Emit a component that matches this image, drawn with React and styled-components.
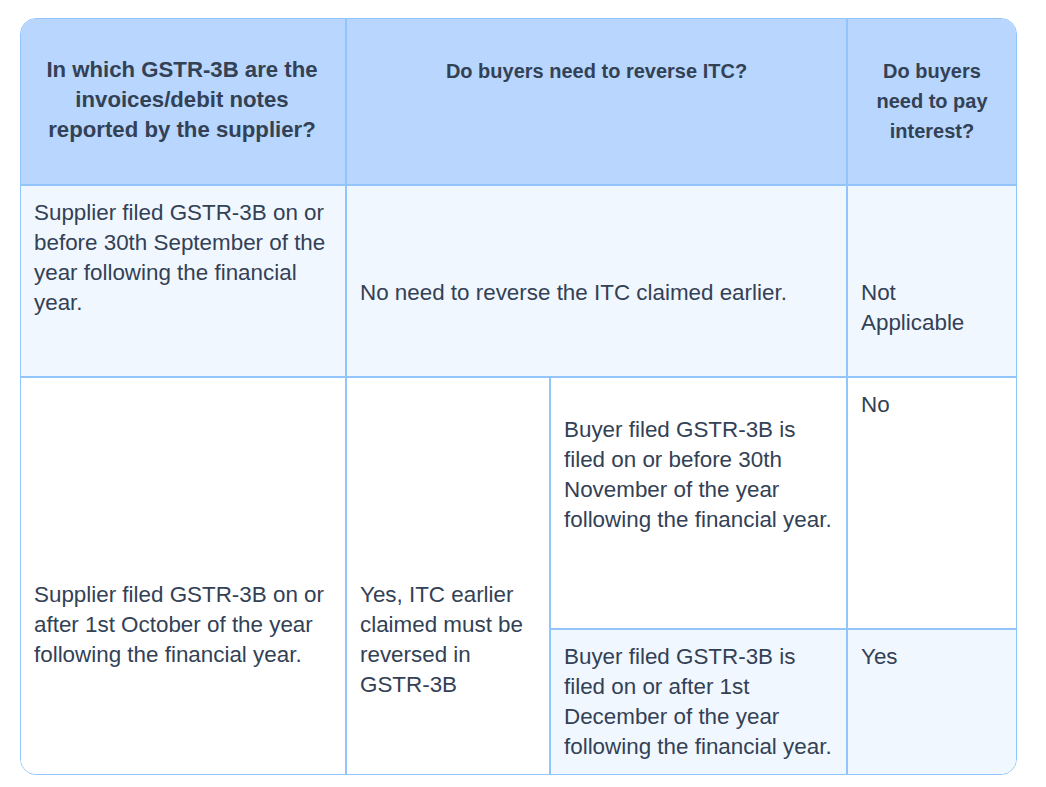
import React from 'react'
import styled, { createGlobalStyle, css } from 'styled-components'

const GlobalStyle = createGlobalStyle`
  body {
    margin: 0;
    background: #ffffff;
    font-family: 'Liberation Sans', Arial, sans-serif;
    color: #334155;
  }
`

const App = () => {
  return (
    <Page>
      <GlobalStyle />
      <Table>
        <HeadCell col="1" row="1" big pad={36}>
          In which GSTR-3B are the invoices/debit notes reported by the supplier?
        </HeadCell>
        <HeadCell col="2 / 4" row="1" pad={37}>
          Do buyers need to reverse ITC?
        </HeadCell>
        <HeadCell col="4" row="1" pad={37} last>
          Do buyers need to pay interest?
        </HeadCell>

        <Cell col="1" row="2" tint pad={12}>
          Supplier filed GSTR-3B on or before 30th September of the year following the financial year.
        </Cell>
        <Cell col="2 / 4" row="2" tint pad={92}>
          No need to reverse the ITC claimed earlier.
        </Cell>
        <Cell col="4" row="2" tint pad={92} last>
          Not Applicable
        </Cell>

        <Cell col="1" row="3 / 5" pad={202} bottom>
          Supplier filed GSTR-3B on or after 1st October of the year following the financial year.
        </Cell>
        <Cell col="2" row="3 / 5" pad={202} bottom>
          Yes, ITC earlier claimed must be reversed in GSTR-3B
        </Cell>
        <Cell col="3" row="3" pad={37}>
          Buyer filed GSTR-3B is filed on or before 30th November of the year following the financial year.
        </Cell>
        <Cell col="4" row="3" pad={12} last>
          No
        </Cell>
        <Cell col="3" row="4" tint pad={12} bottom>
          Buyer filed GSTR-3B is filed on or after 1st December of the year following the financial year.
        </Cell>
        <Cell col="4" row="4" tint pad={12} last bottom>
          Yes
        </Cell>
      </Table>
    </Page>
  )
}

export default App

/**
 * Styles
 */

const Page = styled.div`
  padding: 18px 0 12px 20px;
`

const Table = styled.div`
  box-sizing: border-box;
  width: 997px;
  display: grid;
  grid-template-columns: 326px 204px 297px 168px;
  grid-template-rows: 167px 192px 252px 144px;
  border: 1px solid #93c5fd;
  border-radius: 16px;
  overflow: hidden;
  background: #ffffff;
`

const cellBase = css`
  box-sizing: border-box;
  grid-column: ${({ col }) => col};
  grid-row: ${({ row }) => row};
  padding: ${({ pad }) => pad}px 12px 0 13px;
  border-right: ${({ last }) => (last ? 'none' : '2px solid #93c5fd')};
  border-bottom: ${({ bottom }) => (bottom ? 'none' : '2px solid #93c5fd')};
  line-height: 30px;
`

const HeadCell = styled.div`
  ${cellBase};
  background: #b8d6fe;
  font-weight: 700;
  text-align: center;
  font-size: ${({ big }) => (big ? '22.2px' : '20px')};
  padding-left: ${({ big }) => (big ? '18px' : '24px')};
  padding-right: ${({ big }) => (big ? '20px' : '24px')};
`

const Cell = styled.div`
  ${cellBase};
  background: ${({ tint }) => (tint ? '#f1f7ff' : '#ffffff')};
  font-size: 22.4px;
`
